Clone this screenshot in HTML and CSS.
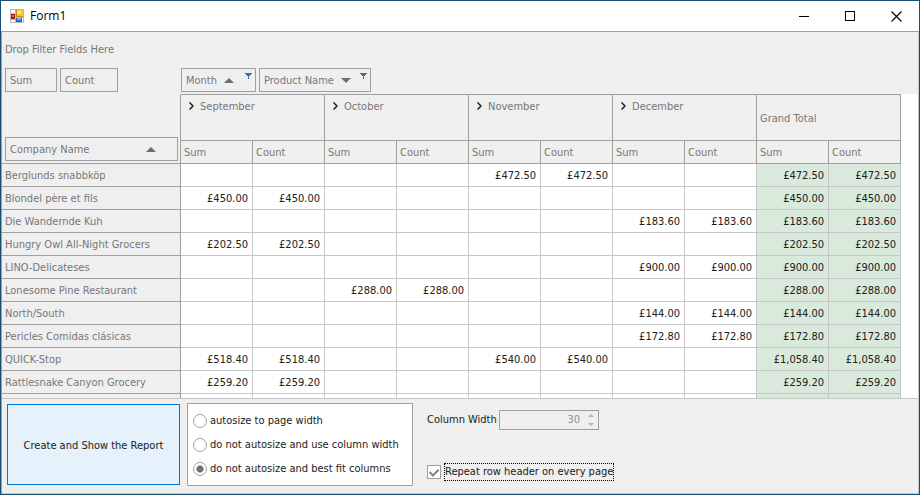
FILE: index.html
```html
<!DOCTYPE html>
<html lang="en">
<head>
<meta charset="utf-8">
<title>Form1</title>
<link rel="stylesheet" href="styles.css">
</head>
<body>
<div class="window">
  <header class="titlebar">
    <svg class="app-icon" width="14" height="14" viewBox="0 0 14 14" shape-rendering="crispEdges" aria-hidden="true">
      <path fill="#b9b9b9" d="M0 0h14v14H0z"/>
      <path fill="#fff" d="M1 1h4v3H1zM1 11h4v2H1zM12 9h1v4h-1z"/>
      <path fill="#a81c12" d="M1 5h4v5H1z"/><path fill="#e0685c" d="M2 6h2v2H2z"/>
      <path fill="#c98a08" d="M6 1h7v7H6z"/><path fill="#f9c22b" d="M7 1h6v6H7z"/><path fill="#ffe58f" d="M7 2h4v3H7z"/>
      <path fill="#2b62c4" d="M6 9h6v4H6z"/><path fill="#76a9f4" d="M7 9h4v2H7z"/>
    </svg>
    <h1 class="title">Form1</h1>
    <div class="caption">
      <button class="caption-btn" aria-label="Minimize"><svg width="11" height="11" shape-rendering="crispEdges"><path d="M0 5h10v1H0z"/></svg></button>
      <button class="caption-btn" aria-label="Maximize"><svg width="11" height="11" shape-rendering="crispEdges"><path fill="none" stroke="#000" d="M.5.5h9v9h-9z"/></svg></button>
      <button class="caption-btn" aria-label="Close"><svg width="11" height="11"><path fill="none" stroke="#000" stroke-width="1.1" d="M.5.5l10 10M10.5.5l-10 10"/></svg></button>
    </div>
  </header>

  <main class="client">
    <section class="pivot">
      <div class="filter-area">Drop Filter Fields Here</div>
      <div class="field-area">
        <div class="fields data-fields">
          <button class="field sum">Sum</button>
          <button class="field count">Count</button>
        </div>
        <div class="fields">
          <button class="field month">Month
            <svg class="sort" width="10" height="5"><path d="M5 0l5 5H0z"/></svg>
            <svg class="funnel" width="7" height="7" shape-rendering="crispEdges"><path d="M0 0h7v1H6v1H5v1H4v3H3V3H2V2H1V1H0z"/></svg>
          </button>
          <button class="field product">Product Name
            <svg class="sort" width="10" height="5"><path d="M0 0h10L5 5z"/></svg>
            <svg class="funnel" width="7" height="7" shape-rendering="crispEdges"><path d="M0 0h7v1H6v1H5v1H4v3H3V3H2V2H1V1H0z"/></svg>
          </button>
        </div>
      </div>
      <div class="grid">
        <table class="table">
          <colgroup><col class="col-name"><col span="10" class="col-value"></colgroup>
          <thead>
            <tr class="groups">
              <th rowspan="2" class="corner"><button class="field company">Company Name <svg class="sort" width="10" height="5"><path d="M5 0l5 5H0z"/></svg></button></th>
              <th colspan="2" class="group"><svg class="chevron" width="5" height="8"><path d="M.5.5L4 4 .5 7.5"/></svg>September</th>
              <th colspan="2" class="group"><svg class="chevron" width="5" height="8"><path d="M.5.5L4 4 .5 7.5"/></svg>October</th>
              <th colspan="2" class="group"><svg class="chevron" width="5" height="8"><path d="M.5.5L4 4 .5 7.5"/></svg>November</th>
              <th colspan="2" class="group"><svg class="chevron" width="5" height="8"><path d="M.5.5L4 4 .5 7.5"/></svg>December</th>
              <th colspan="2" class="total-head">Grand Total</th>
            </tr>
            <tr><th>Sum</th><th>Count</th><th>Sum</th><th>Count</th><th>Sum</th><th>Count</th><th>Sum</th><th>Count</th><th>Sum</th><th>Count</th></tr>
          </thead>
          <tbody>
            <tr><th>Berglunds snabbköp</th><td></td><td></td><td></td><td></td><td>£472.50</td><td>£472.50</td><td></td><td></td><td>£472.50</td><td>£472.50</td></tr>
            <tr><th>Blondel père et fils</th><td>£450.00</td><td>£450.00</td><td></td><td></td><td></td><td></td><td></td><td></td><td>£450.00</td><td>£450.00</td></tr>
            <tr><th>Die Wandernde Kuh</th><td></td><td></td><td></td><td></td><td></td><td></td><td>£183.60</td><td>£183.60</td><td>£183.60</td><td>£183.60</td></tr>
            <tr><th>Hungry Owl All-Night Grocers</th><td>£202.50</td><td>£202.50</td><td></td><td></td><td></td><td></td><td></td><td></td><td>£202.50</td><td>£202.50</td></tr>
            <tr><th>LINO-Delicateses</th><td></td><td></td><td></td><td></td><td></td><td></td><td>£900.00</td><td>£900.00</td><td>£900.00</td><td>£900.00</td></tr>
            <tr><th>Lonesome Pine Restaurant</th><td></td><td></td><td>£288.00</td><td>£288.00</td><td></td><td></td><td></td><td></td><td>£288.00</td><td>£288.00</td></tr>
            <tr><th>North/South</th><td></td><td></td><td></td><td></td><td></td><td></td><td>£144.00</td><td>£144.00</td><td>£144.00</td><td>£144.00</td></tr>
            <tr><th>Pericles Comidas clásicas</th><td></td><td></td><td></td><td></td><td></td><td></td><td>£172.80</td><td>£172.80</td><td>£172.80</td><td>£172.80</td></tr>
            <tr><th>QUICK-Stop</th><td>£518.40</td><td>£518.40</td><td></td><td></td><td>£540.00</td><td>£540.00</td><td></td><td></td><td>£1,058.40</td><td>£1,058.40</td></tr>
            <tr><th>Rattlesnake Canyon Grocery</th><td>£259.20</td><td>£259.20</td><td></td><td></td><td></td><td></td><td></td><td></td><td>£259.20</td><td>£259.20</td></tr>
            <tr><th></th><td></td><td></td><td></td><td></td><td></td><td></td><td></td><td></td><td></td><td></td></tr>
          </tbody>
        </table>
      </div>
    </section>

    <section class="options">
      <button class="report-btn">Create and Show the Report</button>
      <div class="radios" role="radiogroup">
        <label class="choice"><input type="radio" name="fit">autosize to page width</label>
        <label class="choice"><input type="radio" name="fit">do not autosize and use column width</label>
        <label class="choice"><input type="radio" name="fit" checked>do not autosize and best fit columns</label>
      </div>
      <div class="settings">
        <div class="width-row">
          <label for="colwidth">Column Width</label>
          <span class="spin">
            <input id="colwidth" type="number" value="30" disabled>
            <svg class="arrows" width="6" height="12"><path d="M0 3l3-3 3 3zM0 9h6l-3 3z"/></svg>
          </span>
        </div>
        <label class="repeat"><input type="checkbox" checked><span class="focus">Repeat row header on every page</span></label>
      </div>
    </section>
  </main>
</div>
</body>
</html>
```
FILE: styles.css
```css
* { box-sizing: border-box; }

body {
  margin: 0;
  font-family: "DejaVu Sans Condensed", "DejaVu Sans", sans-serif;
  font-size: 11px;
  line-height: 14px;
  color: #202020;
}

button, input { font: inherit; color: inherit; margin: 0; }
svg { display: block; flex: none; }

.window {
  display: flex;
  flex-direction: column;
  height: 100vh;
  border: 1px solid #1b4f72;
  background: #fff;
}

.titlebar { display: flex; align-items: center; height: 30px; padding-left: 9px; }
.title {
  margin: 0 auto 0 6px;
  font: 12px/16px "Open Sans", sans-serif;
  color: #000;
}
.caption { display: flex; height: 100%; }
.caption-btn {
  display: grid;
  place-items: center;
  width: 46px;
  padding: 0;
  border: 0;
  background: none;
}

.client {
  flex: 1;
  min-height: 0;
  display: flex;
  flex-direction: column;
  border: 1px solid #c6c6c6;
  border-top-color: #a0a0a0;
  border-left-color: #a0a0a0;
  background: #efefef;
}

.pivot {
  flex: 1;
  min-height: 0;
  display: flex;
  flex-direction: column;
  border-bottom: 1px solid #c6c6c6;
  color: #777;
}
.filter-area { padding: 11px 3px 9px; }
.field-area { display: flex; padding: 2px 3px; }
.fields { display: flex; gap: 3px; }
.data-fields { width: 176px; }

.field {
  display: flex;
  align-items: center;
  height: 24px;
  padding: 1px 4px 0;
  border: 1px solid #a0a0a0;
  background: #efefef;
  white-space: nowrap;
}
.sum { width: 52px; }
.count { width: 58px; }
.month { width: 75px; }
.product { width: 112px; }
.company { width: 173px; }
.sort { margin-left: 7px; margin-bottom: 1px; fill: #6e6e6e; }
.company .sort { margin: 0 17px 1px auto; }
.funnel { margin: 3px -1px 0 auto; align-self: flex-start; fill: #4a69a5; }

.grid { flex: 1; min-height: 0; overflow: hidden; background: #fff; }
.table { table-layout: fixed; width: 899px; border-collapse: separate; border-spacing: 0; }
.col-name { width: 179px; }
.col-value { width: 72px; }

th, td {
  height: 23px;
  padding: 2px 4px 0 3px;
  border: solid #c6c6c6;
  border-width: 0 1px 1px 0;
  white-space: nowrap;
}
th {
  font-weight: normal;
  text-align: left;
  background: #efefef;
  border-color: #a0a0a0;
}
td { text-align: right; color: #202020; }
td:nth-last-child(-n+2) { background: #d9eadc; }
.groups th { border-top: 1px solid #a0a0a0; height: 47px; }
.groups .corner { border-top-color: #efefef; vertical-align: bottom; padding-bottom: 2px; }
.groups .group { vertical-align: top; padding-top: 5px; padding-left: 8px; }
.chevron {
  display: inline-block;
  margin-right: 6px;
  fill: none;
  stroke: #202020;
  stroke-width: 1.5;
}

.options { display: flex; gap: 7px; padding: 4px 5px 7px; }
.report-btn {
  width: 173px;
  margin: 1px 0;
  padding: 2px 6px 0;
  border: 1px solid #0078d7;
  background: #e5f1fb;
}
.radios {
  display: flex;
  flex-direction: column;
  justify-content: space-between;
  width: 226px;
  height: 83px;
  padding: 10px 5px 9px;
  border: 1px solid #a0a0a0;
  background: #fff;
}
.choice { display: flex; align-items: center; gap: 3px; white-space: nowrap; }
.choice input {
  appearance: none;
  flex: none;
  width: 14px;
  height: 14px;
  border: 1px solid #a0a0a0;
  border-radius: 50%;
  background: #fff;
}
.choice input:checked { background: radial-gradient(circle, #6e6e6e 3px, #fff 4px); }

.settings {
  display: flex;
  flex-direction: column;
  justify-content: space-between;
  align-items: flex-start;
  padding: 7px 7px 5px;
}
.width-row { display: flex; align-items: center; gap: 5px; }
.width-row label { width: 67px; white-space: nowrap; }
.spin {
  display: flex;
  align-items: center;
  width: 100px;
  height: 20px;
  padding-right: 4px;
  border: 1px solid #a0a0a0;
}
.spin input {
  appearance: textfield;
  flex: 1;
  min-width: 0;
  padding: 0 8px 0 0;
  border: 0;
  background: none;
  text-align: right;
  color: #909090;
}
.spin input::-webkit-inner-spin-button { display: none; }
.arrows { fill: #b4b4b4; }
.repeat { display: flex; align-items: center; gap: 3px; }
.repeat input {
  appearance: none;
  width: 14px;
  height: 14px;
  border: 1px solid #a0a0a0;
  background: #fff;
  display: grid;
  place-items: center;
}
.repeat input:checked::before {
  content: "";
  width: 4px;
  height: 7px;
  margin-bottom: 1px;
  border: solid #808080;
  border-width: 0 2px 2px 0;
  transform: rotate(45deg);
}
.focus {
  height: 18px;
  padding: 1px 0;
  border: 1px dotted #000;
  white-space: nowrap;
}
```
